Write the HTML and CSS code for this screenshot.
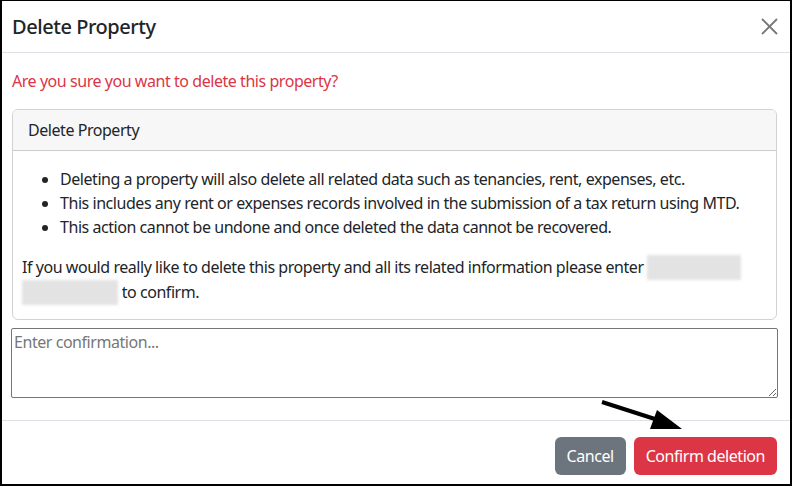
FILE: index.html
```html
<!DOCTYPE html>
<html>
  <head>
    <meta charset="utf-8" />
    <title>Delete Property</title>
    <link rel="stylesheet" href="styles.css">
  </head>
  <body>
    <div class="modal-content">
      <!-- ヘッダー -->
      <div class="modal-header">
        <h5 class="modal-title">Delete Property</h5>
        <button class="btn-close" type="button" aria-label="Close">
          <svg width="17" height="17" viewBox="0 0 17 17">
            <path d="M1 1 L16 16 M16 1 L1 16" stroke="#777" stroke-width="1.8" fill="none"/>
          </svg>
        </button>
      </div>

      <!-- 本文 -->
      <div class="modal-body">
        <p class="text-danger">Are you sure you want to delete this property?</p>
        <div class="card">
          <div class="card-header">Delete Property</div>
          <div class="card-body">
            <ul>
              <li>Deleting a property will also delete all related data such as tenancies, rent, expenses, etc.</li>
              <li>This includes any rent or expenses records involved in the submission of a tax return using MTD.</li>
              <li>This action cannot be undone and once deleted the data cannot be recovered.</li>
            </ul>
            <p class="last">If you would really like to delete this property and all its related information please enter <span class="blurred blurred-a"></span> <span class="blurred blurred-b"></span> to confirm.</p>
          </div>
        </div>
        <textarea class="confirm-input" placeholder="Enter confirmation..."></textarea>
      </div>

      <!-- フッター -->
      <div class="modal-footer">
        <button class="btn btn-secondary" type="button">Cancel</button>
        <button class="btn btn-danger" type="button">Confirm deletion</button>
      </div>

      <!-- 矢印 -->
      <svg class="arrow" width="100" height="40" viewBox="0 0 100 40">
        <path d="M2 3 L58 21" stroke="#000" stroke-width="4" fill="none"/>
        <path d="M50 30 L82 30 L57 11 Z" fill="#000"/>
      </svg>
    </div>
  </body>
</html>
```

FILE: styles.css
```css
* {
  box-sizing: border-box;
}
body {
  margin: 0;
  font-family: "Noto Sans", "Open Sans", sans-serif;
  font-size: 16px;
  line-height: 1.5;
  letter-spacing: -0.45px;
  color: #212529;
  background: #fff;
}

.modal-content {
  position: relative;
  height: 486px;
  overflow: hidden;
  border: 2px solid #000;
  border-top-width: 1px;
}

/* ヘッダー */
.modal-header {
  display: flex;
  align-items: center;
  justify-content: space-between;
  height: 52px;
  padding: 0 12px 0 10px;
  border-bottom: 1px solid #dee2e6;
}
.modal-title {
  margin: 0;
  font-size: 20px;
  font-weight: 500;
  line-height: 30px;
}
.btn-close {
  border: 0;
  background: transparent;
  padding: 0;
  width: 17px;
  height: 17px;
  display: flex;
  margin-top: -1px;
}

/* 本文 */
.modal-body {
  padding: 16px 13px 22px 10px;
}
.text-danger {
  color: #dc3545;
  margin: 0 0 16px;
}
.card {
  border: 1px solid rgba(0, 0, 0, 0.175);
  border-radius: 6px;
  margin-bottom: 8px;
}
.card-header {
  padding: 8px 15px;
  background: #f7f7f7;
  border-bottom: 1px solid rgba(0, 0, 0, 0.175);
  border-radius: 5px 5px 0 0;
}
.card-body {
  padding: 16px 9px 14px;
}
.card-body ul {
  margin: 0 0 16px;
  padding-left: 38px;
}
.card-body .last {
  margin: 0;
}
.blurred {
  display: inline-block;
  height: 25px;
  vertical-align: -7px;
  background: #e3e3e3;
  filter: blur(1.5px);
}
.blurred-a {
  width: 94px;
}
.blurred-b {
  width: 96px;
}

.confirm-input {
  display: block;
  width: 767px;
  height: 70px;
  margin-left: -1px;
  padding: 2px;
  border: 1px solid #767676;
  border-radius: 2px;
  font-family: inherit;
  font-size: 16px;
  letter-spacing: -0.45px;
  resize: vertical;
}
.confirm-input::placeholder {
  color: #777;
}

/* フッター */
.modal-footer {
  display: flex;
  justify-content: flex-end;
  gap: 8px;
  padding: 16px 13px 0;
  border-top: 1px solid #dee2e6;
}
.btn {
  height: 38px;
  padding: 0 12px;
  border: 0;
  border-radius: 6px;
  color: #fff;
  font-family: inherit;
  font-size: 16px;
  letter-spacing: -0.45px;
}
.btn-secondary {
  background: #6c757d;
}
.btn-danger {
  background: #dc3545;
}

.arrow {
  position: absolute;
  left: 598px;
  top: 398px;
}
```
